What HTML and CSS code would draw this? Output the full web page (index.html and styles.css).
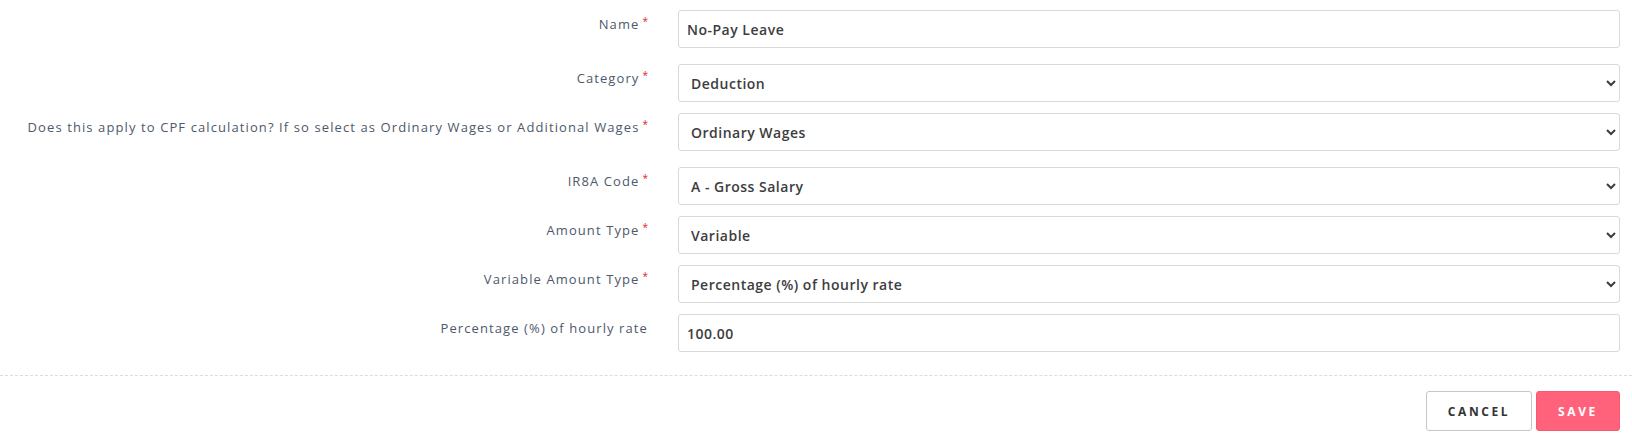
FILE: index.html
```html
<!DOCTYPE html>
<html lang="en">
<head>
<meta charset="utf-8">
<title>Pay Item</title>
<link rel="stylesheet" href="styles.css">
</head>
<body>
<form class="form">
  <div class="fields">
    <div class="row row-wide">
      <label class="label">Name<span class="req">*</span></label>
      <input class="control" type="text" value="No-Pay Leave">
    </div>
    <div class="row">
      <label class="label">Category<span class="req">*</span></label>
      <select class="control"><option>Deduction</option></select>
    </div>
    <div class="row row-wide">
      <label class="label">Does this apply to CPF calculation? If so select as Ordinary Wages or Additional Wages<span class="req">*</span></label>
      <select class="control"><option>Ordinary Wages</option></select>
    </div>
    <div class="row">
      <label class="label">IR8A Code<span class="req">*</span></label>
      <select class="control"><option>A - Gross Salary</option></select>
    </div>
    <div class="row">
      <label class="label">Amount Type<span class="req">*</span></label>
      <select class="control"><option>Variable</option></select>
    </div>
    <div class="row">
      <label class="label">Variable Amount Type<span class="req">*</span></label>
      <select class="control"><option>Percentage (%) of hourly rate</option></select>
    </div>
    <div class="row">
      <label class="label">Percentage (%) of hourly rate</label>
      <input class="control" type="text" value="100.00">
    </div>
  </div>
  <div class="footer">
    <button type="button" class="btn btn-cancel">CANCEL</button>
    <button type="button" class="btn btn-save">SAVE</button>
  </div>
</form>
</body>
</html>
```
FILE: styles.css
```css
* { box-sizing: border-box; }
html, body { margin: 0; padding: 0; background: #fff; }
body {
  font-family: "Open Sans", "Liberation Sans", sans-serif;
  color: #333;
}
.fields {
  padding: 10px 12px 0 0;
}
.row {
  display: grid;
  grid-template-columns: 648px 1fr;
  column-gap: 30px;
  margin-bottom: 11px;
}
.row-wide { margin-bottom: 16px; }
.row:last-child { margin-bottom: 0; }
.label {
  text-align: right;
  font-size: 13px;
  line-height: 20px;
  padding-top: 4px;
  color: #4d596b;
  letter-spacing: 1.1px;
  white-space: nowrap;
}
.req {
  color: #e8202f;
  font-size: 10px;
  vertical-align: top;
  line-height: 14px;
  margin-left: 3px;
  letter-spacing: 0;
}
.control {
  height: 38px;
  width: 100%;
  border: 1px solid #d9d9d9;
  border-radius: 3px;
  background: #fff;
  padding: 0 8px;
  font-family: "Open Sans", "Liberation Sans", sans-serif;
  font-size: 14px;
  font-weight: 600;
  letter-spacing: 0.5px;
  color: #3d3d3d;
  outline: none;
}
.footer {
  margin-top: 23px;
  border-top: 1px dashed #dcdcdc;
  padding: 15px 12px 0 0;
  display: flex;
  justify-content: flex-end;
  gap: 4px;
}
.btn {
  height: 40px;
  border-radius: 3px;
  font-family: "Open Sans", "Liberation Sans", sans-serif;
  font-size: 12px;
  font-weight: 700;
  letter-spacing: 2.6px;
  cursor: pointer;
}
.btn-cancel {
  width: 106px;
  background: #fff;
  border: 1px solid #c6c6c6;
  color: #333;
}
.btn-save {
  width: 84px;
  background: #ff627a;
  border: 1px solid #f55a72;
  color: #fff;
}
```
